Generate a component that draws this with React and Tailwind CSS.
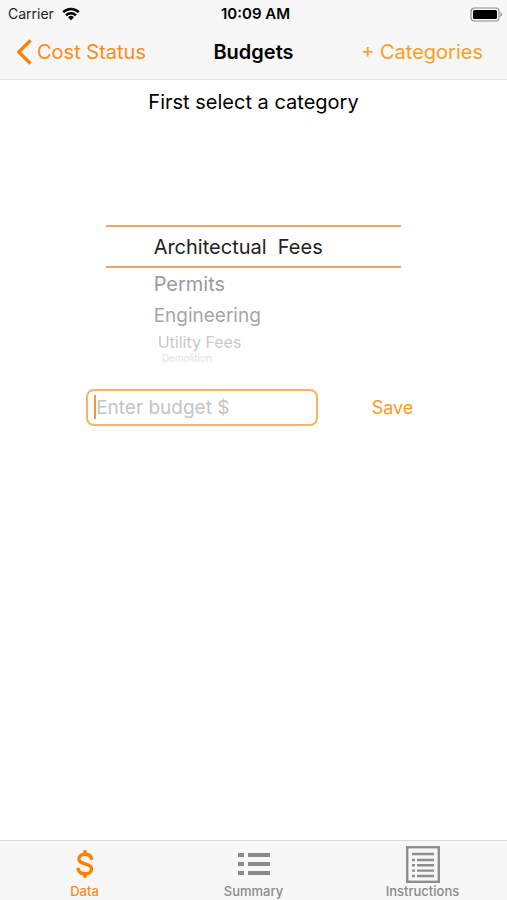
import { useState } from 'react'

const CATEGORIES = [
  { name: 'Architectual  Fees', row: 'h-[43px] pl-12 text-xl text-[#222222]' },
  { name: 'Permits', row: 'h-8 pl-12 text-xl text-[#9b9b9b]' },
  { name: 'Engineering', row: 'h-8 pl-12 text-[19px] text-[#a6a6a6]' },
  { name: 'Utility Fees', row: 'h-5 pl-13 text-base leading-5 text-[#c9c9c9]' },
  { name: 'Demolition', row: 'h-3 pl-14 text-[10px] leading-3 text-[#e2e2e2]' },
]

function StatusBar() {
  return (
    <div className="grid h-7 grid-cols-3 items-center pr-1 pl-2 text-sm text-[#222222]">
      <div className="flex items-center gap-2">
        <span>Carrier</span>
        <svg viewBox="0 0 18 14" className="h-[14px] w-[18px]" fill="none" stroke="#000" strokeWidth="2.4" aria-hidden="true">
          <path d="M1.2 5.2a11.2 11.2 0 0 1 15.6 0" />
          <path d="M4 8.3a7.2 7.2 0 0 1 10 0" />
          <path d="M9 13.2 6 10.3a4.3 4.3 0 0 1 6 0z" fill="#000" stroke="none" />
        </svg>
      </div>
      <span className="text-center text-[15px] font-semibold text-black">10:09 AM</span>
      <svg viewBox="0 0 33 15" className="h-[15px] w-[33px] justify-self-end" aria-hidden="true">
        <rect x="1" y="1" width="28" height="13" rx="3.5" fill="#f7f7f7" stroke="#8c8c8c" strokeWidth="1.2" />
        <rect x="3" y="3" width="24" height="9" rx="1.5" fill="#000" />
        <path d="M30.5 5.5v4c1.2-.4 1.6-1.2 1.6-2s-.4-1.6-1.6-2z" fill="#8c8c8c" />
      </svg>
    </div>
  )
}

function NavBar() {
  return (
    <nav className="grid grid-cols-[1fr_auto_1fr] items-center px-4 pt-1 pb-[7px] text-xl">
      <a href="#cost-status" className="flex h-10 items-center gap-[5px] text-[#ff8a1c]">
        <svg viewBox="0 0 16 26" className="h-[26px] w-4" fill="none" stroke="#ff7f00" strokeWidth="3.2" aria-hidden="true">
          <path d="M14.5 1.3 2.8 13l11.7 11.7" />
        </svg>
        Cost Status
      </a>
      <h1 className="font-semibold text-black">Budgets</h1>
      <button type="button" className="mr-2 justify-self-end text-[#fb9d23]">
        + Categories
      </button>
    </nav>
  )
}

function CategoryPicker() {
  const [selected, setSelected] = useState(CATEGORIES[0].name)

  return (
    <div role="listbox" aria-label="Category" className="mx-auto w-7/12 pt-[109px]">
      {CATEGORIES.map((category, index) => (
        <button
          key={category.name}
          type="button"
          role="option"
          aria-selected={selected === category.name}
          onClick={() => setSelected(category.name)}
          className={`flex w-full items-center text-left whitespace-pre ${category.row} ${
            index === 0 ? 'border-y-2 border-[#f0a368]' : ''
          }`}
        >
          {category.name}
        </button>
      ))}
    </div>
  )
}

function BudgetForm() {
  const [budget, setBudget] = useState('')

  return (
    <form className="mt-[25px] flex items-center pl-[17%]" onSubmit={(e) => e.preventDefault()}>
      <div className="relative w-[55%]">
        <input
          type="text"
          aria-label="Budget"
          placeholder="Enter budget $"
          value={budget}
          onChange={(e) => setBudget(e.target.value)}
          className="block h-[37px] w-full rounded-lg border-2 border-[#f9b366] bg-white px-2 text-[19px] text-[#222222] caret-[#f59a33] outline-none placeholder:text-[#c4c4c8]"
        />
        {budget === '' && <span className="absolute top-1.5 left-2 h-6 w-0.5 bg-[#f0983c]" />}
      </div>
      <button type="submit" className="ml-[54px] text-lg text-[#fd9a1c]">
        Save
      </button>
    </form>
  )
}

function DollarIcon() {
  return (
    <svg viewBox="0 0 20 30" className="h-[30px] w-5" fill="none" stroke="#ff7f00" strokeWidth="3.4" strokeLinecap="round" aria-hidden="true">
      <path d="M10 2.5v3M10 24.5v3" />
      <path d="M16.5 9.5C15.8 6.8 13.5 5.3 10 5.3c-3.7 0-6.1 1.8-6.1 4.6 0 6.5 12.6 3.4 12.6 10 0 3.1-2.6 4.9-6.5 4.9-3.7 0-6.2-1.7-6.8-4.7" />
    </svg>
  )
}

function ListIcon() {
  return (
    <svg viewBox="0 0 32 22" className="h-[22px] w-8" fill="#8a8a8a" aria-hidden="true">
      <path d="M0 0h6v4H0zM10 0h22v4H10zM0 9h6v4H0zM10 9h22v4H10zM0 18h6v4H0zM10 18h22v4H10z" />
    </svg>
  )
}

function PageIcon() {
  return (
    <svg viewBox="0 0 34 37" className="h-[37px] w-[34px]" fill="none" stroke="#8e8e8e" strokeWidth="2.4" aria-hidden="true">
      <rect x="1.2" y="1.2" width="31.6" height="34.6" />
      <path d="M6 8h22M11 14h17M11 19.3h17M11 24.6h17M11 30h17" />
      <path d="M6 14h3M6 19.3h3M6 24.6h3M6 30h3" />
    </svg>
  )
}

const TABS = [
  { id: 'data', label: 'Data', Icon: DollarIcon },
  { id: 'summary', label: 'Summary', Icon: ListIcon },
  { id: 'instructions', label: 'Instructions', Icon: PageIcon },
]

function TabBar() {
  return (
    <nav className="grid grid-cols-3 border-t border-[#d9d9d9] bg-[#f7f7f7] pt-1 pb-px">
      {TABS.map(({ id, label, Icon }) => (
        <a
          key={id}
          href={`#${id}`}
          className={`flex flex-col items-center text-[13px] font-medium ${
            id === 'data' ? 'text-[#ff8a1c]' : 'text-[#8a8a8a]'
          }`}
        >
          <span className="flex h-[38px] items-center">
            <Icon />
          </span>
          <span className="leading-4">{label}</span>
        </a>
      ))}
    </nav>
  )
}

export default function App() {
  return (
    <div className="flex min-h-screen flex-col bg-white font-['Inter',sans-serif]">
      <header className="border-b border-[#dedede] bg-[#f7f7f7]">
        <StatusBar />
        <NavBar />
      </header>
      <main className="flex-1">
        <h2 className="pt-2 text-center text-xl text-black">First select a category</h2>
        <CategoryPicker />
        <BudgetForm />
      </main>
      <TabBar />
    </div>
  )
}
